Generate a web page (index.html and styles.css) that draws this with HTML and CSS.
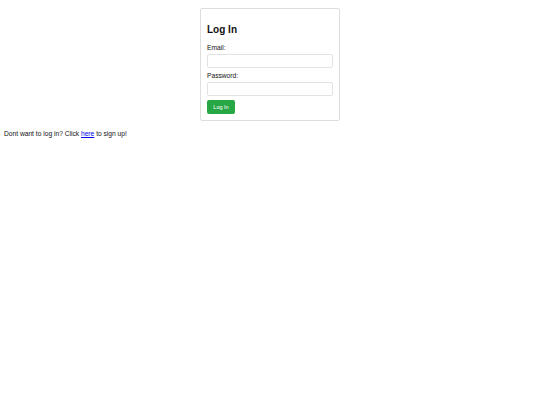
FILE: index.html
```html
<!DOCTYPE html>
<html>
<head>
<meta charset="utf-8">
<title>Log In</title>
<link rel="stylesheet" href="styles.css">
</head>
<body>
<div class="card">
  <h2 class="title">Log In</h2>
  <form class="form">
    <label class="label" for="email">Email:</label>
    <input class="field" type="email" id="email">
    <label class="label" for="password">Password:</label>
    <input class="field" type="password" id="password">
    <button class="btn" type="button">Log In</button>
  </form>
</div>
<p class="note">Dont want to log in? Click <a class="link" href="#">here</a> to sign up!</p>
</body>
</html>
```
FILE: styles.css
```css
body {
  margin: 4px;
  font-family: "Liberation Sans", Arial, sans-serif;
  font-size: 6.67px;
  color: #111;
  background: #fff;
}
.card {
  width: 126px;
  margin: 4px auto 0;
  padding: 7px 6px 6px;
  border: 1px solid #dedede;
  border-radius: 2px;
}
.title {
  font-size: 10px;
  font-weight: bold;
  margin: 7px 0 6px;
  line-height: 14px;
}
.form {
  display: flex;
  flex-direction: column;
}
.label {
  display: block;
  line-height: 9px;
  margin-bottom: 1.5px;
}
.field {
  box-sizing: border-box;
  width: 100%;
  height: 14px;
  margin: 0 0 3.5px;
  border: 1px solid #e2e2e2;
  border-radius: 2px;
  padding: 0 3px;
  font-size: 6.67px;
}
.btn {
  align-self: flex-start;
  margin-top: 0.5px;
  height: 14px;
  width: 28px;
  padding: 0;
  background: #28a745;
  color: #fff;
  border: none;
  border-radius: 2px;
  font-family: "Liberation Sans", Arial, sans-serif;
  font-size: 5.5px;
}
.note {
  margin: 8px 0;
  line-height: 9px;
}
.link {
  color: #0000ee;
}
```
